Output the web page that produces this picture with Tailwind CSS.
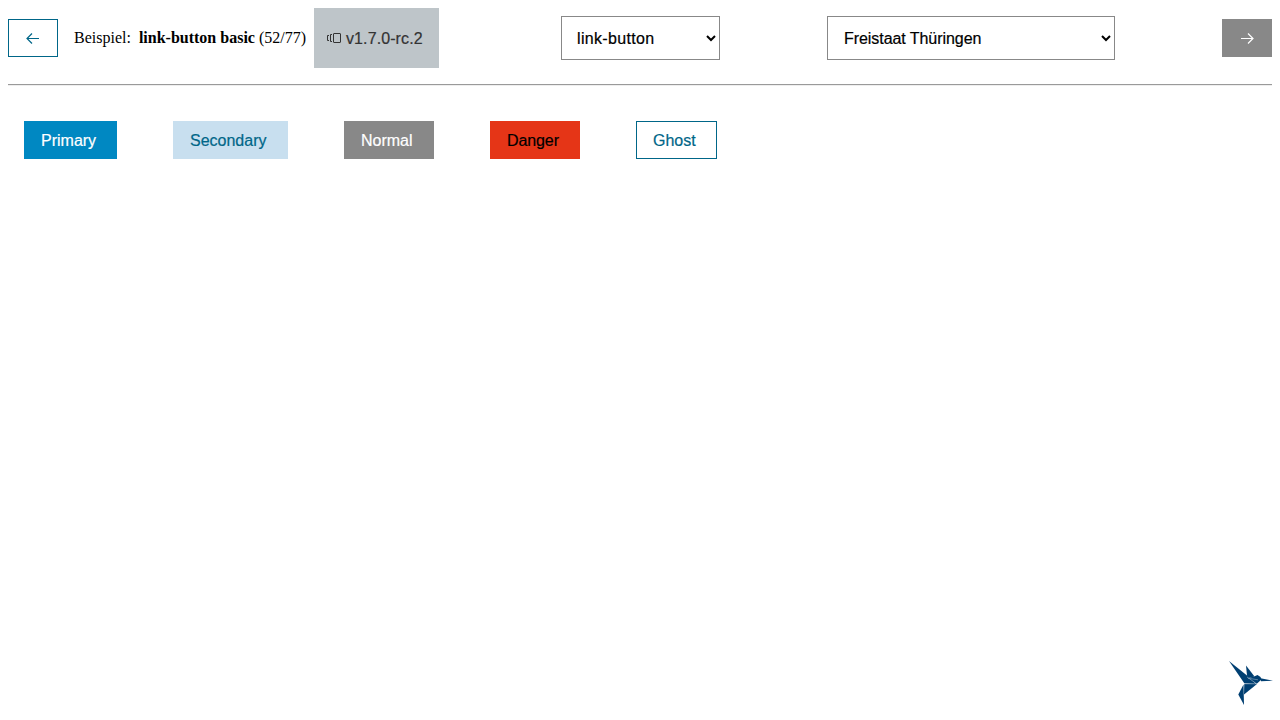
<!DOCTYPE html>
<html lang="de">
<head>
<meta charset="utf-8">
<title>link-button basic</title>
<script src="https://cdn.jsdelivr.net/npm/@tailwindcss/browser@4"></script>
</head>
<body class="h-screen overflow-hidden bg-white p-2 text-base text-black font-['Liberation_Serif',serif]">
<header class="flex h-[60px] items-center">
  <button aria-label="Zurück" class="flex h-[38px] w-[50px] shrink-0 items-center justify-center border border-[#006688] text-[#006688]">
    <svg class="h-4 w-4" viewBox="0 0 16 16" fill="none" stroke="currentColor" stroke-width="1.2"><path d="M14 8.500H2M7 3.500l-5 5 5 5"/></svg>
  </button>
  <div class="ml-4 w-[240px] shrink-0 whitespace-pre"><span>Beispiel:  </span><b>link-button basic</b><span> (52/77)</span></div>
  <div class="flex h-[60px] w-[125px] shrink-0 items-center bg-[#bec5c9] pl-3 text-[#333333] font-['Liberation_Sans',sans-serif]">
    <svg class="mr-1 h-4 w-4" viewBox="0 0 16 16" fill="none" stroke="currentColor" stroke-width="1"><rect x="7.500" y="3.500" width="7" height="9" rx=".5"/><path d="M6 4.500H4.500v7H6M3 5.500H1.500v5H3"/></svg>
    <span class="pt-0.5 tracking-[0.1px] [-webkit-text-stroke:0.2px]">v1.7.0-rc.2</span>
  </div>
  <button class="ml-[122px] flex h-[44px] w-[159px] shrink-0 items-center justify-between border border-[#888888] pl-[15px] pr-[3px] font-['Liberation_Sans',sans-serif]">
    <span class="pt-0.5 tracking-[0.33px] [-webkit-text-stroke:0.2px]">link-button</span>
    <svg class="h-2.5 w-2.5" viewBox="0 0 10 10" fill="none" stroke="currentColor" stroke-width="2"><path d="M1 3l4 4 4-4"/></svg>
  </button>
  <button class="ml-[107px] flex h-[44px] w-[288px] shrink-0 items-center justify-between border border-[#888888] pl-4 pr-[3px] font-['Liberation_Sans',sans-serif]">
    <span class="pt-0.5 tracking-[-0.06px] [-webkit-text-stroke:0.2px]">Freistaat Thüringen</span>
    <svg class="h-2.5 w-2.5" viewBox="0 0 10 10" fill="none" stroke="currentColor" stroke-width="2"><path d="M1 3l4 4 4-4"/></svg>
  </button>
  <button aria-label="Weiter" class="ml-[107px] flex h-[38px] w-[50px] shrink-0 items-center justify-center bg-[#888888] text-white">
    <svg class="h-4 w-4" viewBox="0 0 16 16" fill="none" stroke="currentColor" stroke-width="1.2"><path d="M2 8.500h12M9 3.500l5 5-5 5"/></svg>
  </button>
</header>
<hr class="mt-4 h-0.5 border-t border-b border-t-[#9a9a9a] border-b-[#eeeeee]">
<main class="mt-[35px] ml-4 flex gap-14 font-['Liberation_Sans',sans-serif] [-webkit-text-stroke:0.2px]">
  <a class="flex h-[38px] w-[93px] items-center bg-[#0088c2] pt-0.5 pl-[17px] text-white">Primary</a>
  <a class="flex h-[38px] w-[115px] items-center bg-[#c8dfef] pt-0.5 pl-[17px] text-[#006688]">Secondary</a>
  <a class="flex h-[38px] w-[90px] items-center bg-[#888888] pt-0.5 pl-[17px] text-white">Normal</a>
  <a class="flex h-[38px] w-[90px] items-center bg-[#e53517] pt-0.5 pl-[17px] text-black tracking-[-0.1px]">Danger</a>
  <a class="flex h-[38px] w-[81px] items-center border border-[#006688] pt-0.5 pl-4 text-[#006688]">Ghost</a>
</main>
<svg class="absolute right-0 bottom-[5px] h-[60px] w-[60px]" viewBox="0 0 60 60" fill="#003f72"><path d="M9 6L27 20.500L36 29L24.500 28.500Z"/><path d="M26 10.500L34.500 21.500L28 23L27 20.500Z"/><path d="M28 23L34 21.500L37.500 20L40.500 22L41.500 24.500L36.500 29Z"/><path d="M40.500 23.200L53 25.700L41 26.200Z"/><path d="M24.300 29L37 29L24 39.500Z"/><path d="M23.500 29.500L24 50L18.300 39.500Z"/><path d="M27 22L36.500 28.700M28 23.200L38 24.800M24 28.800H37" fill="none" stroke="#ffffff" stroke-opacity=".7" stroke-width=".5"/></svg>
</body>
</html>
